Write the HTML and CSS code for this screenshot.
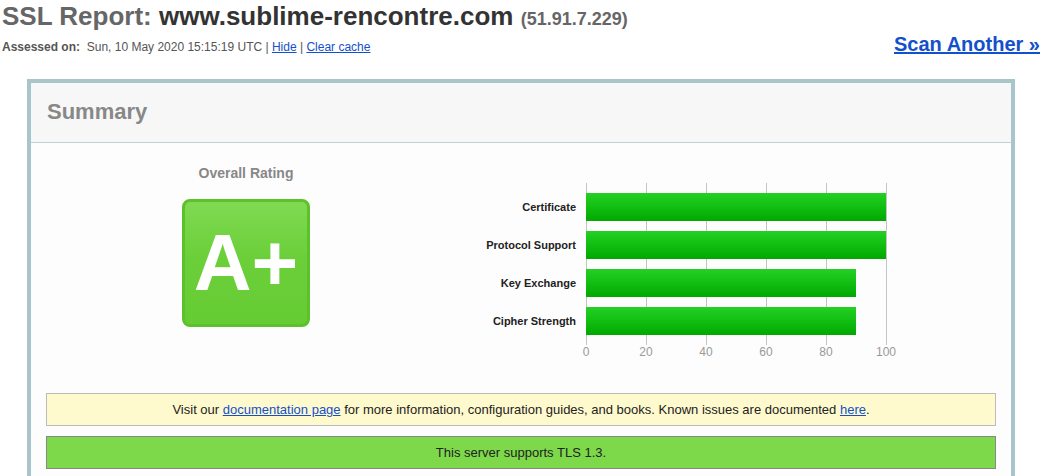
FILE: index.html
```html
<!DOCTYPE html>
<html lang="en">
<head>
	<meta charset="UTF-8">
	<title>SSL Report: www.sublime-rencontre.com</title>
	<link rel="stylesheet" href="styles.css">
</head>
<body>
	<div class="top">
		<div class="topLeft">
			<h1 class="reportTitle">SSL Report: <span class="host">www.sublime-rencontre.com</span> <span class="ip">(51.91.7.229)</span></h1>
			<div class="assessed"><b>Assessed on:</b>&nbsp; Sun, 10 May 2020 15:15:19 UTC | <a href="#">Hide</a> | <a href="#">Clear cache</a></div>
		</div>
		<a class="scanAnother" href="#">Scan Another &raquo;</a>
	</div>

	<div class="reportSection">
		<div class="sectionTitle">Summary</div>
		<div class="sectionBody">
			<div class="summary">
				<div class="rating">
					<div class="ratingTitle">Overall Rating</div>
					<div class="grade">A+</div>
				</div>
				<div class="chart">
					<div class="chartRows">
						<div class="labels">
							<div>Certificate</div>
							<div>Protocol Support</div>
							<div>Key Exchange</div>
							<div>Cipher Strength</div>
						</div>
						<div class="plot">
							<div class="bar" style="width: 300px"></div>
							<div class="bar" style="width: 300px"></div>
							<div class="bar" style="width: 270px"></div>
							<div class="bar" style="width: 270px"></div>
						</div>
					</div>
					<div class="axis">
						<span>0</span><span>20</span><span>40</span><span>60</span><span>80</span><span>100</span>
					</div>
				</div>
			</div>

			<div class="noticeBox">Visit our <a href="#">documentation page</a> for more information, configuration guides, and books. Known issues are documented <a href="#">here</a>.</div>
			<div class="goodBox">This server supports TLS 1.3.</div>
		</div>
	</div>
</body>
</html>
```

FILE: styles.css
```css
*{
	padding: 0;
	margin: 0;
	box-sizing: border-box;
}
body{
	background-color: #fff;
	font-family: Arial, "Liberation Sans", sans-serif;
	font-size: 12px;
	color: #222;
	padding: 0 8px 0 2px;
}
a{
	color: #1350cc;
}
.top{
	display: flex;
	justify-content: space-between;
	align-items: flex-end;
}
.reportTitle{
	font-size: 26px;
	line-height: 30px;
	margin-top: 1px;
	color: #666;
	font-weight: bold;
}
.reportTitle .host{
	color: #333;
}
.reportTitle .ip{
	font-size: 18px;
	color: #666;
}
.assessed{
	margin-top: 5px;
	line-height: 16px;
	color: #555;
}
.scanAnother{
	font-size: 20px;
	font-weight: bold;
	line-height: 24px;
	margin-bottom: -1px;
}
.reportSection{
	width: 988px;
	margin: 24px 0 0 25px;
	border: 4px solid #a8c5c9;
	border-bottom: 0;
	background-color: #fdfdfd;
}
.sectionTitle{
	height: 60px;
	line-height: 58px;
	padding-left: 16px;
	background-color: #f7f7f7;
	border-bottom: 1px solid #bcd3d6;
	font-size: 22px;
	font-weight: bold;
	color: #888;
}
.sectionBody{
	padding: 20px 15px 20px 15px;
}
.summary{
	display: flex;
}
.rating{
	width: 400px;
	display: flex;
	flex-direction: column;
	align-items: center;
}
.ratingTitle{
	font-size: 14px;
	font-weight: bold;
	line-height: 20px;
	color: #888;
}
.grade{
	width: 128px;
	height: 128px;
	margin-top: 16px;
	border: 3px solid #5dc12c;
	border-radius: 8px;
	background: linear-gradient(#80da52, #6bcf3a 45%, #66cc33);
	color: #fff;
	font-size: 80px;
	font-weight: bold;
	text-align: center;
	line-height: 122px;
}
.chart{
	margin-top: 20px;
}
.chartRows{
	display: flex;
}
.labels{
	width: 140px;
	padding: 10px 10px 0 0;
	text-align: right;
	font-weight: bold;
	font-size: 11px;
	color: #222;
}
.labels div{
	height: 38px;
	line-height: 28px;
}
.plot{
	width: 301px;
	height: 162px;
	padding: 10px 0;
	background: repeating-linear-gradient(to right, #c4c4c4 0, #c4c4c4 1px, transparent 1px, transparent 60px);
}
.bar{
	height: 28px;
	margin-bottom: 10px;
	background: linear-gradient(#25cf25, #14c014 45%, #00a800);
}
.axis{
	display: flex;
	margin-left: 110px;
	color: #999;
	font-size: 12px;
	line-height: 14px;
}
.axis span{
	width: 60px;
	text-align: center;
}
.noticeBox{
	margin-top: 34px;
	height: 33px;
	line-height: 31px;
	border: 1px solid #bbb;
	background-color: #fffacd;
	text-align: center;
	font-size: 13px;
}
.goodBox{
	margin-top: 10px;
	height: 33px;
	line-height: 31px;
	border: 1px solid #888;
	background-color: #7dd84a;
	text-align: center;
	font-size: 13px;
}
```
